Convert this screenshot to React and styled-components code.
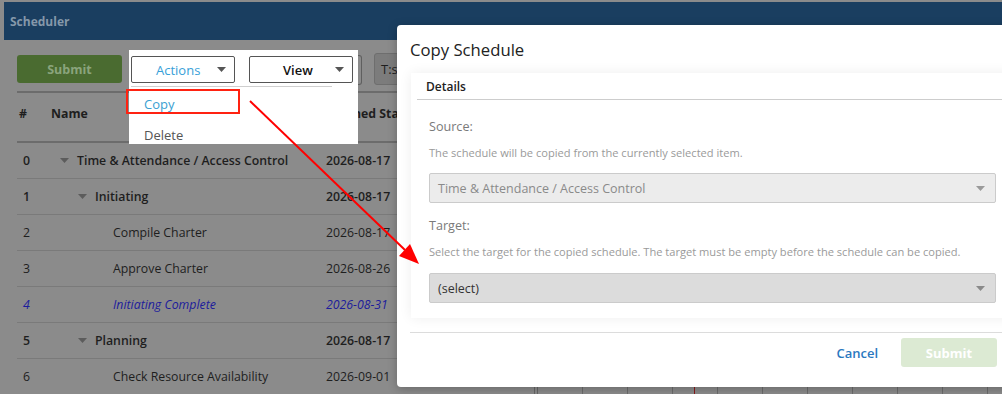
import React from "react";
import styled, { createGlobalStyle } from "styled-components";

const rows = [
  { id: 0, name: "Time & Attendance / Access Control", date: "2026-08-17", level: 0, parent: true },
  { id: 1, name: "Initiating", date: "2026-08-17", level: 1, parent: true },
  { id: 2, name: "Compile Charter", date: "2026-08-17", level: 2 },
  { id: 3, name: "Approve Charter", date: "2026-08-26", level: 2 },
  { id: 4, name: "Initiating Complete", date: "2026-08-31", level: 2, milestone: true },
  { id: 5, name: "Planning", date: "2026-08-17", level: 1, parent: true },
  { id: 6, name: "Check Resource Availability", date: "2026-09-01", level: 2 },
];

function Caret({ color = "#555" }) {
  return (
    <svg width="9" height="5" viewBox="0 0 9 5">
      <path d="M0 0h9L4.5 5z" fill={color} />
    </svg>
  );
}

function App() {
  return (
    <Page>
      <GlobalStyle />
      <Shell>
        <Header>Scheduler</Header>
        <Toolbar>
          <GreenButton>Submit</GreenButton>
          <ActionsGroup>
            <DropButton $link>
              <span>Actions</span>
              <Caret />
            </DropButton>
            <DropButton $strong>
              <span>View</span>
              <Caret />
            </DropButton>
            <Menu>
              <MenuRule />
              <MenuItem $active>
                Copy
                <Highlight />
              </MenuItem>
              <MenuItem>Delete</MenuItem>
            </Menu>
          </ActionsGroup>
          <HiddenSelect />
          <GreyButton>T:s</GreyButton>
        </Toolbar>

        <TableArea>
          <Grid>
            <HeadRow>
              <HeadCell>#</HeadCell>
              <HeadCell $pad={0}>Name</HeadCell>
              <HeadCell $pad={0}>Planned Start</HeadCell>
            </HeadRow>
            {rows.map((r) => (
              <Row key={r.id} $parent={r.parent} $milestone={r.milestone}>
                <NumCell>{r.id}</NumCell>
                <NameCell style={{ paddingLeft: 9 + r.level * 18 }}>
                  <Toggle>{r.parent && <Caret color="#5c5c5c" />}</Toggle>
                  {r.name}
                </NameCell>
                <DateCell>{r.date}</DateCell>
              </Row>
            ))}
          </Grid>
          <Gantt />
        </TableArea>
      </Shell>

      <Modal>
        <ModalTitle>Copy Schedule</ModalTitle>
        <Panel>
          <PanelHead>Details</PanelHead>
          <PanelBody>
            <Label>Source:</Label>
            <Hint>The schedule will be copied from the currently selected item.</Hint>
            <Select $bg="#ececec" $color="#8a8a8a">
              <span>Time &amp; Attendance / Access Control</span>
              <Caret color="#9a9a9a" />
            </Select>
            <Label $top={14}>Target:</Label>
            <Hint $bottom={12}>
              Select the target for the copied schedule. The target must be empty before the
              schedule can be copied.
            </Hint>
            <Select $bg="#dcdcdc" $color="#333">
              <span>(select)</span>
              <Caret color="#8a8a8a" />
            </Select>
          </PanelBody>
        </Panel>
        <Footer>
          <LinkButton>Cancel</LinkButton>
          <SubmitButton>Submit</SubmitButton>
        </Footer>
      </Modal>

      <Annotation width="1002" height="394" viewBox="0 0 1002 394">
        <line x1="250" y1="101" x2="405" y2="250" stroke="#f00" strokeWidth="2" />
        <polygon points="419,264 399,256 410,244" fill="#f00" />
      </Annotation>
    </Page>
  );
}

export default App;

const GlobalStyle = createGlobalStyle`
  body {
    margin: 0;
    font-family: "Open Sans", "Noto Sans", sans-serif;
  }
`;

const Page = styled.div`
  position: relative;
  width: 1002px;
  height: 394px;
  overflow: hidden;
  background: #8b8b8b;
  padding-top: 2px;
  box-sizing: border-box;
`;

const Shell = styled.div`
  margin-left: 4px;
`;

const Header = styled.div`
  height: 38px;
  background: #1a3e60;
  color: #8598aa;
  font-size: 12px;
  font-weight: 700;
  display: flex;
  align-items: center;
  padding-left: 6px;
`;

const Toolbar = styled.div`
  display: flex;
  align-items: flex-start;
  padding: 10px 0 0 13px;
  height: 51px;
  box-sizing: border-box;
`;

const GreenButton = styled.div`
  margin-top: 5px;
  width: 105px;
  height: 28px;
  border-radius: 3px;
  background: #4a6b30;
  color: #8aa47c;
  font-size: 12.5px;
  font-weight: 700;
  display: flex;
  align-items: center;
  justify-content: center;
`;

const ActionsGroup = styled.div`
  position: relative;
  z-index: 2;
  margin-left: 7px;
  display: flex;
  gap: 14px;
  padding: 6px 5px 1px 2px;
  background: #fff;
`;

const DropButton = styled.div`
  width: 104px;
  height: 27px;
  box-sizing: border-box;
  border: 1px solid #555;
  border-radius: 2px;
  display: flex;
  align-items: center;
  justify-content: space-between;
  padding: 0 8px 0 ${(p) => (p.$link ? 24 : 33)}px;
  font-size: 13px;
  color: ${(p) => (p.$link ? "#38a0d8" : "#111")};
  font-weight: ${(p) => (p.$strong ? 600 : 400)};
`;

const Menu = styled.div`
  position: absolute;
  top: 100%;
  left: 0;
  right: 0;
  height: 60px;
  background: #fff;
  padding: 2px 0 0 2px;
  box-sizing: border-box;
`;

const MenuRule = styled.div`
  width: 201px;
  height: 1px;
  background: #cfcfcf;
  margin-bottom: 2px;
`;

const MenuItem = styled.div`
  position: relative;
  height: 31px;
  line-height: 31px;
  padding-left: 13px;
  font-size: 13px;
  color: ${(p) => (p.$active ? "#3a9fd2" : "#555")};
`;

const Highlight = styled.span`
  position: absolute;
  left: -5px;
  top: 0;
  width: 114px;
  height: 25px;
  border: 2px solid #f21;
  box-sizing: border-box;
`;

const HiddenSelect = styled.div`
  margin-top: 5px;
  width: 3px;
  height: 28px;
  border: 1px solid #5f5f5f;
  border-left: none;
  border-radius: 0 3px 3px 0;
`;

const GreyButton = styled.div`
  margin: 3px 0 0 12px;
  height: 30px;
  padding: 0 6px;
  border: 1px solid #6e6e6e;
  border-radius: 3px;
  background: #7c7c7c;
  color: #1e1e1e;
  font-size: 13px;
  display: flex;
  align-items: center;
`;

const TableArea = styled.div`
  display: flex;
  margin-left: 13px;
`;

const Grid = styled.div`
  width: 517px;
  color: #1e1e1e;
  font-size: 12.3px;
`;

const HeadRow = styled.div`
  display: grid;
  grid-template-columns: 34px 275px 208px;
  height: 52px;
  padding-bottom: 7px;
  align-items: center;
  border-top: 2px solid #6c6c6c;
  border-bottom: 2px solid #6c6c6c;
  box-sizing: border-box;
  font-weight: 700;
  white-space: nowrap;
`;

const HeadCell = styled.div`
  padding-left: ${(p) => (p.$pad ?? 2)}px;
`;

const Row = styled.div`
  display: grid;
  grid-template-columns: 34px 275px 208px;
  height: 36px;
  align-items: center;
  border-bottom: 1px solid #7a7a7a;
  box-sizing: border-box;
  white-space: nowrap;
  font-weight: ${(p) => (p.$parent ? 600 : 400)};
  font-style: ${(p) => (p.$milestone ? "italic" : "normal")};
  color: ${(p) => (p.$milestone ? "#1c1c9c" : "#1e1e1e")};
`;

const NumCell = styled.div`
  padding-left: 6px;
`;

const NameCell = styled.div`
  display: flex;
  align-items: center;
`;

const Toggle = styled.span`
  width: 17px;
  display: inline-flex;
  align-items: center;
`;

const DateCell = styled.div``;

const Gantt = styled.div`
  flex: 1;
  height: 400px;
  border-left: 4px double #666;
  background:
    linear-gradient(90deg, transparent 156px, #8a1a1a 156px 157px, transparent 157px) no-repeat,
    repeating-linear-gradient(90deg, transparent 0 44px, #6c6c6c 44px 45px);
`;

const Modal = styled.div`
  position: absolute;
  left: 397px;
  top: 25px;
  width: 631px;
  height: 362px;
  background: #fff;
  border-radius: 4px;
  box-shadow: 0 2px 10px rgba(0, 0, 0, 0.25);
  z-index: 3;
`;

const ModalTitle = styled.div`
  padding: 13px 13px 0;
  height: 48px;
  box-sizing: border-box;
  font-size: 16.7px;
  line-height: 24px;
  color: #222;
`;

const Panel = styled.div`
  margin: 0 14px;
  background: #fff;
  box-shadow: 0 0 12px rgba(0, 0, 0, 0.07);
  padding-bottom: 15px;
`;

const PanelHead = styled.div`
  margin-left: 6px;
  height: 27px;
  padding-left: 9px;
  box-sizing: border-box;
  display: flex;
  align-items: center;
  border-bottom: 1px solid #cdcdcd;
  font-size: 12px;
  font-weight: 600;
  color: #222;
`;

const PanelBody = styled.div`
  padding: 0 18px;
`;

const Label = styled.div`
  margin-top: ${(p) => p.$top ?? 18}px;
  font-size: 12.6px;
  line-height: 18px;
  color: #7a7a7a;
`;

const Hint = styled.div`
  margin: 8px 0 ${(p) => p.$bottom ?? 11}px;
  font-size: 11.1px;
  line-height: 18px;
  color: #9a9a9a;
  white-space: nowrap;
`;

const Select = styled.div`
  height: 30px;
  box-sizing: border-box;
  border: 1px solid #cbcbcb;
  border-radius: 2px;
  background: ${(p) => p.$bg};
  color: ${(p) => p.$color};
  font-size: 12.5px;
  display: flex;
  align-items: center;
  justify-content: space-between;
  padding: 0 10px 0 8px;
`;

const Footer = styled.div`
  margin: 14px 0 0 13px;
  border-top: 1px solid #dcdcdc;
  display: flex;
  justify-content: flex-end;
  align-items: center;
  gap: 23px;
  padding: 5px 31px 0 0;
`;

const LinkButton = styled.div`
  font-size: 13px;
  font-weight: 600;
  color: #2a78bf;
`;

const SubmitButton = styled.div`
  width: 96px;
  height: 29px;
  border-radius: 3px;
  background: #dcead3;
  color: #fff;
  font-size: 13px;
  font-weight: 700;
  display: flex;
  align-items: center;
  justify-content: center;
`;

const Annotation = styled.svg`
  position: absolute;
  left: 0;
  top: 0;
  z-index: 5;
  pointer-events: none;
`;
